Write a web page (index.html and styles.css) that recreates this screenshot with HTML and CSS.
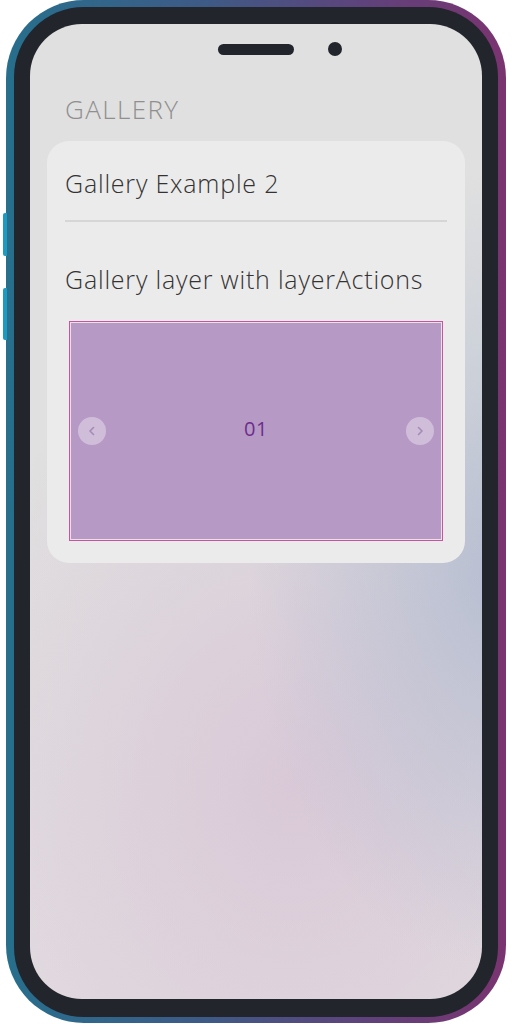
FILE: index.html
```html
<!DOCTYPE html>
<html>
<head>
<meta charset="utf-8">
<link rel="stylesheet" href="styles.css">
</head>
<body>
<div class="phone">
  <span class="side-btn side-btn-1"></span>
  <span class="side-btn side-btn-2"></span>
  <div class="bezel">
    <div class="screen">
      <div class="notch">
        <span class="speaker"></span>
        <span class="camera"></span>
      </div>
      <h1 class="title">GALLERY</h1>
      <div class="card">
        <div class="row row-first">Gallery Example 2</div>
        <div class="row row-second">Gallery layer with layerActions</div>
        <div class="gallery">
          <button class="nav nav-prev" aria-label="previous">
            <svg viewBox="0 0 12 12" width="12" height="12"><path d="M7.5 2.5 L4 6 L7.5 9.5" fill="none" stroke="#a68bb6" stroke-width="1.6" stroke-linecap="round" stroke-linejoin="round"/></svg>
          </button>
          <span class="slide-label">01</span>
          <button class="nav nav-next" aria-label="next">
            <svg viewBox="0 0 12 12" width="12" height="12"><path d="M4.5 2.5 L8 6 L4.5 9.5" fill="none" stroke="#a68bb6" stroke-width="1.6" stroke-linecap="round" stroke-linejoin="round"/></svg>
          </button>
        </div>
      </div>
    </div>
  </div>
</div>
</body>
</html>
```
FILE: styles.css
```css
html, body {
  margin: 0;
  padding: 0;
  background: #ffffff;
}
body {
  width: 512px;
  height: 1024px;
  font-family: "Open Sans", Lato, sans-serif;
}
.phone {
  position: relative;
  box-sizing: border-box;
  width: 500px;
  height: 1023px;
  margin-left: 6px;
  padding: 7px 8px 6px 8px;
  border-radius: 78px;
  background: linear-gradient(90deg, #276f8c 0%, #3e5a86 40%, #62407a 75%, #7a3470 100%);
}
.side-btn {
  position: absolute;
  left: -3px;
  width: 4px;
  border-radius: 2px 0 0 2px;
  background: #1c9bc2;
}
.side-btn-1 { top: 213px; height: 43px; }
.side-btn-2 { top: 288px; height: 52px; }
.bezel {
  box-sizing: border-box;
  height: 100%;
  padding: 17px 16px 18px 16px;
  border-radius: 70px;
  background: #22252c;
}
.screen {
  box-sizing: border-box;
  height: 100%;
  padding: 18px 17px 0 17px;
  border-radius: 52px;
  overflow: hidden;
  background:
    radial-gradient(ellipse 250px 400px at 104% 56%, rgba(170,182,205,0.75), rgba(170,182,205,0) 100%),
    radial-gradient(ellipse 380px 460px at 58% 78%, rgba(214,192,212,0.7), rgba(214,192,212,0) 100%),
    linear-gradient(180deg, #e0e0e0 0%, #e0e0e0 45%, #e2dde0 100%);
}
.notch {
  display: grid;
  grid-template-columns: 1fr auto 1fr;
  align-items: center;
  height: 12px;
}
.speaker {
  grid-column: 2;
  width: 76px;
  height: 11px;
  border-radius: 6px;
  background: #22252c;
}
.camera {
  grid-column: 3;
  justify-self: start;
  width: 14px;
  height: 14px;
  margin-left: 34px;
  border-radius: 50%;
  background: #22252c;
}
.title {
  margin: 0;
  padding: 38px 0 0 18px;
  height: 49px;
  font-size: 26px;
  font-weight: 300;
  line-height: 34px;
  letter-spacing: 1.4px;
  color: #8f8f8f;
}
.card {
  box-sizing: border-box;
  width: 418px;
  height: 422px;
  padding: 0 18px;
  border-radius: 22px;
  background: #ebebeb;
}
.row {
  font-size: 25px;
  font-weight: 300;
  letter-spacing: 0.8px;
  color: #333333;
}
.row-first {
  height: 79px;
  line-height: 84px;
  border-bottom: 2px solid #d6d6d6;
}
.row-second {
  height: 99px;
  line-height: 114px;
}
.gallery {
  position: relative;
  box-sizing: border-box;
  display: flex;
  align-items: center;
  justify-content: space-between;
  width: 374px;
  height: 220px;
  margin-left: 4px;
  padding: 0 8px;
  border: 1px solid #c4559e;
  box-shadow: inset 0 0 0 1px #f1dcea;
  background: #b69ac5;
}
.nav {
  display: flex;
  align-items: center;
  justify-content: center;
  width: 28px;
  height: 28px;
  padding: 0;
  border: none;
  border-radius: 50%;
  background: rgba(255,255,255,0.35);
}
.slide-label {
  font-size: 20px;
  font-weight: 400;
  line-height: 20px;
  margin-top: -4px;
  letter-spacing: 0.5px;
  color: #6c2d8c;
}
```
